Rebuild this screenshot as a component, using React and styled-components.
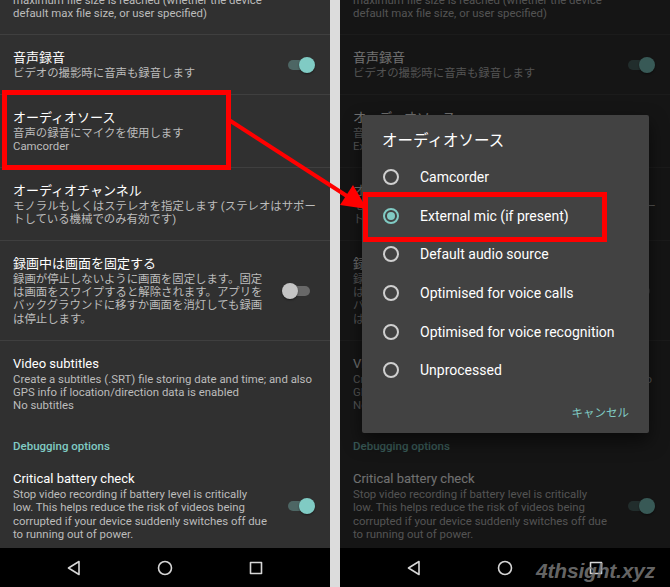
import React from "react";
import styled, { createGlobalStyle } from "styled-components";

const GlobalStyle = createGlobalStyle`
  html, body {
    margin: 0;
    padding: 0;
    background: #fff;
  }
  body {
    width: 670px;
    height: 587px;
    overflow: hidden;
    font-family: Roboto, "Noto Sans CJK JP", sans-serif;
  }
`;

const TEAL = "#80cbc4";

const sourceOptions = [
  "Camcorder",
  "External mic (if present)",
  "Default audio source",
  "Optimised for voice calls",
  "Optimised for voice recognition",
  "Unprocessed",
];

const buildSettings = (source) => [
  {
    title: "最大ファイルサイズで再開",
    lines: [
      "Whether to automatically restart recording if the",
      "maximum file size is reached (whether the device",
      "default max file size, or user specified)",
    ],
  },
  {
    title: "音声録音",
    lines: ["ビデオの撮影時に音声も録音します"],
    toggle: "on",
  },
  {
    title: "オーディオソース",
    lines: ["音声の録音にマイクを使用します", source],
  },
  {
    title: "オーディオチャンネル",
    lines: [
      "モノラルもしくはステレオを指定します (ステレオはサポー",
      "トしている機械でのみ有効です)",
    ],
  },
  {
    title: "録画中は画面を固定する",
    lines: [
      "録画が停止しないように画面を固定します。固定",
      "は画面をスワイプすると解除されます。アプリを",
      "バックグラウンドに移すか画面を消灯しても録画",
      "は停止します。",
    ],
    toggle: "off",
  },
  {
    title: "Video subtitles",
    lines: [
      "Create a subtitles (.SRT) file storing date and time; and also",
      "GPS info if location/direction data is enabled",
      "No subtitles",
    ],
    last: true,
  },
  { category: "Debugging options" },
  {
    title: "Critical battery check",
    lines: [
      "Stop video recording if battery level is critically",
      "low. This helps reduce the risk of videos being",
      "corrupted if your device suddenly switches off due",
      "to running out of power.",
    ],
    toggle: "on",
  },
];

const SettingsList = ({ source }) => (
  <List>
    {buildSettings(source).map((s, i) =>
      s.category ? (
        <Category key={i}>{s.category}</Category>
      ) : (
        <Item key={i} $divider={!s.last}>
          <ItemText>
            <Title>{s.title}</Title>
            {s.lines.map((l, j) => (
              <SummaryLine key={j}>{l}</SummaryLine>
            ))}
          </ItemText>
          {s.toggle && (
            <Switch>
              <Track $on={s.toggle === "on"} />
              <Thumb $on={s.toggle === "on"} />
            </Switch>
          )}
        </Item>
      )
    )}
  </List>
);

const NavBar = () => (
  <Nav>
    <NavIcon viewBox="0 0 20 20">
      <path d="M15 3.5 L4.5 10 L15 16.5 Z" />
    </NavIcon>
    <NavIcon viewBox="0 0 20 20">
      <circle cx="10" cy="10" r="6.5" />
    </NavIcon>
    <NavIcon viewBox="0 0 20 20">
      <rect x="4.5" y="4.5" width="11" height="11" />
    </NavIcon>
  </Nav>
);

const App = () => {
  return (
    <>
      <GlobalStyle />
      <Stage>
        <Phone>
          <Screen>
            <SettingsList source="Camcorder" />
          </Screen>
          <NavBar />
        </Phone>

        <Phone>
          <Screen>
            <SettingsList source="External mic (if present)" />
            <Scrim />
            <Dialog>
              <DialogTitle>オーディオソース</DialogTitle>
              {sourceOptions.map((o, i) => (
                <Option key={o}>
                  <Radio $checked={i === 1} />
                  {o}
                </Option>
              ))}
              <ButtonBar>
                <TextButton>キャンセル</TextButton>
              </ButtonBar>
            </Dialog>
          </Screen>
          <NavBar />
        </Phone>

        <SourceHighlight />
        <MicHighlight />
        <Arrow viewBox="0 0 670 587">
          <line x1="229" y1="120" x2="350" y2="198" />
          <polygon points="367,209 340,205 353,185" />
        </Arrow>
        <Watermark>4thsight.xyz</Watermark>
      </Stage>
    </>
  );
};

export default App;

const Stage = styled.div`
  position: relative;
  width: 670px;
  height: 587px;
  display: flex;
  gap: 10px;
  background: #dcdcdc;
  overflow: hidden;
`;

const Phone = styled.div`
  width: 330px;
  height: 587px;
  display: flex;
  flex-direction: column;
  background: #303030;
`;

const Screen = styled.div`
  position: relative;
  flex: 1;
  overflow: hidden;
`;

const List = styled.div`
  margin-top: -51px;
`;

const Item = styled.div`
  display: flex;
  align-items: center;
  padding: 14px 15px 14px 13px;
  border-bottom: 1px solid ${(p) => (p.$divider ? "#3f3f3f" : "transparent")};
`;

const ItemText = styled.div`
  flex: 1;
  min-width: 0;
`;

const Title = styled.div`
  font-size: 13px;
  line-height: 17.5px;
  color: #fff;
  white-space: nowrap;
`;

const SummaryLine = styled.div`
  font-size: 11.4px;
  line-height: 13.3px;
  color: #bcbcbc;
  white-space: nowrap;
`;

const Category = styled.div`
  padding: 13px 13px 3px;
  font-size: 11.5px;
  line-height: 13px;
  font-weight: 500;
  color: ${TEAL};
`;

const Switch = styled.span`
  position: relative;
  flex: none;
  width: 33px;
  height: 16px;
  margin-left: 10px;
`;

const Track = styled.span`
  position: absolute;
  left: 6px;
  top: 3px;
  width: 22px;
  height: 10px;
  border-radius: 5px;
  background: ${(p) => (p.$on ? "#4d6664" : "#686868")};
`;

const Thumb = styled.span`
  position: absolute;
  top: 0;
  left: ${(p) => (p.$on ? "17px" : "0")};
  width: 16px;
  height: 16px;
  border-radius: 50%;
  background: ${(p) => (p.$on ? TEAL : "#c4c4c4")};
  box-shadow: 0 1px 2px rgba(0, 0, 0, 0.45);
`;

const Nav = styled.div`
  flex: none;
  height: 39px;
  background: #000;
  display: flex;
  align-items: center;
  justify-content: center;
  gap: 71px;
`;

const NavIcon = styled.svg`
  width: 20px;
  height: 20px;
  fill: none;
  stroke: #d6d6d6;
  stroke-width: 1.6;
  stroke-linejoin: round;
`;

const Scrim = styled.div`
  position: absolute;
  inset: 0;
  background: rgba(0, 0, 0, 0.56);
`;

const Dialog = styled.div`
  position: absolute;
  top: 115px;
  left: 22px;
  width: 287px;
  background: #424242;
  border-radius: 2px;
  box-shadow: 0 8px 18px rgba(0, 0, 0, 0.55);
`;

const DialogTitle = styled.div`
  padding: 16px 20px 7px;
  font-size: 15.5px;
  line-height: 20px;
  color: #fff;
`;

const Option = styled.div`
  height: 38.6px;
  display: flex;
  align-items: center;
  gap: 21px;
  padding-left: 21px;
  font-size: 14px;
  color: #fff;
  white-space: nowrap;
`;

const Radio = styled.span`
  position: relative;
  flex: none;
  width: 16px;
  height: 16px;
  box-sizing: border-box;
  border-radius: 50%;
  border: 2px solid ${(p) => (p.$checked ? TEAL : "#cfcfcf")};

  &::after {
    content: "";
    display: ${(p) => (p.$checked ? "block" : "none")};
    position: absolute;
    left: 2px;
    top: 2px;
    width: 8px;
    height: 8px;
    border-radius: 50%;
    background: ${TEAL};
  }
`;

const ButtonBar = styled.div`
  display: flex;
  justify-content: flex-end;
  padding: 4px 12px 3.4px;
`;

const TextButton = styled.div`
  height: 36px;
  padding: 0 8px;
  display: flex;
  align-items: center;
  font-size: 11.5px;
  color: ${TEAL};
`;

const Highlight = styled.div`
  position: absolute;
  box-sizing: border-box;
  border: 5px solid #ff0000;
  pointer-events: none;
`;

const SourceHighlight = styled(Highlight)`
  left: 2px;
  top: 90px;
  width: 229px;
  height: 80px;
`;

const MicHighlight = styled(Highlight)`
  left: 363px;
  top: 192px;
  width: 244px;
  height: 50px;
`;

const Arrow = styled.svg`
  position: absolute;
  inset: 0;
  width: 670px;
  height: 587px;
  pointer-events: none;

  line {
    stroke: #ff0000;
    stroke-width: 4;
  }
  polygon {
    fill: #ff0000;
  }
`;

const Watermark = styled.div`
  position: absolute;
  left: 536px;
  top: 560px;
  font-family: "Liberation Sans", Arial, sans-serif;
  font-size: 21px;
  line-height: 21px;
  font-weight: 700;
  font-style: italic;
  color: rgba(128, 128, 128, 0.8);
  letter-spacing: -0.2px;
`;
